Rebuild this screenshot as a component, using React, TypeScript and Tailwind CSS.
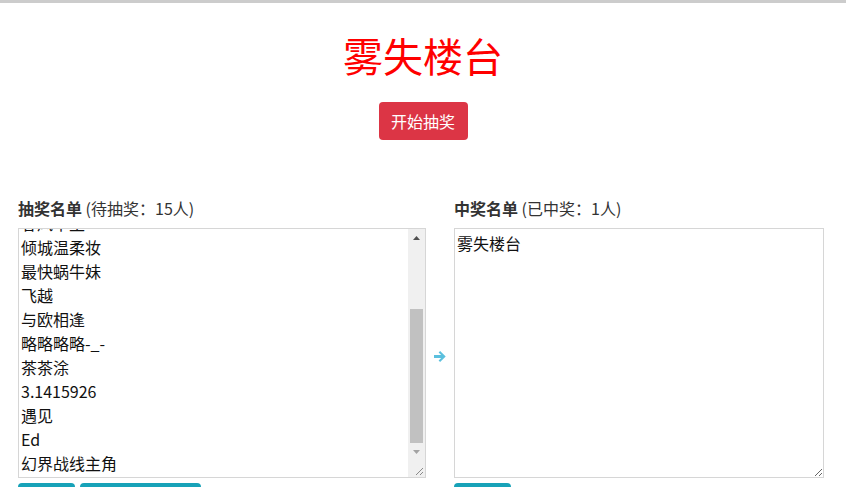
import React, { useEffect, useRef } from 'react';

const pending = [
  '小鹿乱撞',
  '一叶知秋',
  '浅笑安然',
  '南风知我意',
  '夜雨听风',
  '春风十里',
  '倾城温柔妆',
  '最快蜗牛妹',
  '飞越',
  '与欧相逢',
  '略略略略-_-',
  '茶茶涂',
  '3.1415926',
  '遇见',
  'Ed',
  '幻界战线主角',
];

const winners = ['雾失楼台'];

function ArrowRight() {
  return (
    <svg width="13" height="11" viewBox="0 0 13 11" aria-hidden="true">
      <path d="M0 4.1h7.2L4.6 1.5 6.1 0l5.6 5.5-5.6 5.5-1.5-1.5 2.6-2.6H0z" fill="#5bc0de" />
    </svg>
  );
}

function Caret({ up, color }: { up?: boolean; color: string }) {
  return (
    <svg width="7" height="4" viewBox="0 0 7 4" aria-hidden="true">
      <path d={up ? 'M0 4L3.5 0 7 4z' : 'M0 0h7L3.5 4z'} fill={color} />
    </svg>
  );
}

// classic 17px scrollbar, thumb parked at the bottom of the track
function FakeScrollbar() {
  return (
    <div className="w-[17px] flex flex-col bg-[#f0f0f0]">
      <div className="h-[17px] flex items-center justify-center">
        <Caret up color="#505050" />
      </div>
      <div className="flex-1 flex flex-col justify-end px-[2px]">
        <div className="h-[134px] bg-[#c1c1c1]" />
      </div>
      <div className="h-[17px] flex items-center justify-center">
        <Caret color="#a3a3a3" />
      </div>
      <div className="h-[17px] bg-[#f0f0f0]">
        <svg width="17" height="17" viewBox="0 0 17 17" aria-hidden="true">
          <path d="M15 8L8 15M15 12L12 15" stroke="#8a8a8a" strokeWidth="1" />
        </svg>
      </div>
    </div>
  );
}

const textClass = 'px-[2px] py-[2px] text-base leading-6 text-[#111] outline-none';

export default function App() {
  const listRef = useRef<HTMLTextAreaElement>(null);

  useEffect(() => {
    if (listRef.current) listRef.current.scrollTop = listRef.current.scrollHeight;
  }, []);

  return (
    <div
      className="h-screen overflow-hidden bg-white text-[#333]"
      style={{ fontFamily: '"Noto Sans CJK SC", "Microsoft YaHei", sans-serif' }}
    >
      <div className="h-[3px] bg-[#cccccc]" />

      <div className="flex flex-col items-center">
        <h1 className="mt-[30px] text-[40px] leading-[44px] font-normal text-[#ff0000]">雾失楼台</h1>
        <button className="mt-[25px] h-[38px] w-[89px] rounded bg-[#dc3545] text-white text-base leading-6">
          开始抽奖
        </button>
      </div>

      <div className="mt-[56px] flex pl-[18px]">
        <div className="w-[408px] flex flex-col">
          <div className="text-base leading-6 mb-[8px]">
            <span className="font-bold">抽奖名单</span>
            <span> (待抽奖：15人)</span>
          </div>
          <div className="h-[250px] flex border border-[#d6d6d6]">
            <textarea
              ref={listRef}
              readOnly
              defaultValue={pending.join('\n')}
              className={`flex-1 h-full resize-none overflow-hidden ${textClass}`}
            />
            <FakeScrollbar />
          </div>
          <div className="mt-[5px] flex gap-[5px]">
            <button className="w-[57px] h-[40px] rounded bg-[#17a2b8] text-white text-sm">导入</button>
            <button className="w-[121px] h-[40px] rounded bg-[#17a2b8] text-white text-sm">导出未中奖</button>
          </div>
        </div>

        <div className="w-[28px] flex justify-center">
          <div className="mt-[155px]">
            <ArrowRight />
          </div>
        </div>

        <div className="w-[370px] flex flex-col">
          <div className="text-base leading-6 mb-[8px]">
            <span className="font-bold">中奖名单</span>
            <span> (已中奖：1人)</span>
          </div>
          <textarea
            readOnly
            defaultValue={winners.join('\n')}
            className={`h-[250px] w-full resize border border-[#d6d6d6] ${textClass}`}
          />
          <div className="mt-[5px] flex">
            <button className="w-[57px] h-[40px] rounded bg-[#17a2b8] text-white text-sm">导出</button>
          </div>
        </div>
      </div>
    </div>
  );
}
